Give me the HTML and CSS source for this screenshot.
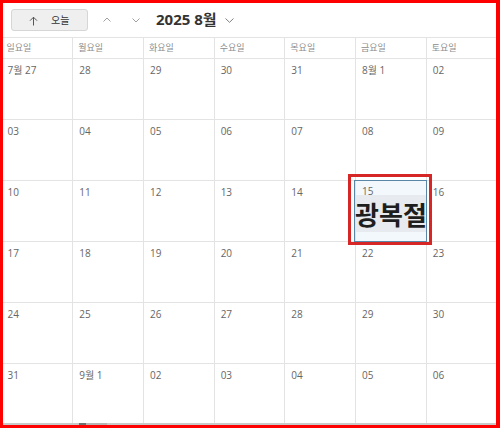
FILE: index.html
```html
<!DOCTYPE html>
<html lang="ko">
<head>
<meta charset="utf-8">
<title>Calendar</title>
<link rel="stylesheet" href="styles.css">
</head>
<body>
<div class="page">
  <div class="toolbar">
    <button class="today-btn">
      <svg class="arrow-up" width="9" height="10" viewBox="0 0 9 10"><path d="M4.5 1.2V9.5M1 4.7L4.5 1.2L8 4.7" fill="none" stroke="#555" stroke-width="1"/></svg>
      <span class="today-label">오늘</span>
    </button>
    <svg class="chev chev-up" width="8" height="5" viewBox="0 0 8 5"><path d="M0.5 4.5L4 1L7.5 4.5" fill="none" stroke="#a0a0a0" stroke-width="1"/></svg>
    <svg class="chev chev-down" width="8" height="5" viewBox="0 0 8 5"><path d="M0.5 0.5L4 4L7.5 0.5" fill="none" stroke="#a0a0a0" stroke-width="1"/></svg>
    <span class="title">2025 8월</span>
    <svg class="chev chev-drop" width="9" height="5" viewBox="0 0 9 5"><path d="M0.5 0.5L4.5 4.3L8.5 0.5" fill="none" stroke="#808080" stroke-width="1"/></svg>
  </div>

  <div class="cal">
    <div class="dow-row">
      <div class="dow">일요일</div><div class="dow">월요일</div><div class="dow">화요일</div><div class="dow">수요일</div><div class="dow">목요일</div><div class="dow">금요일</div><div class="dow">토요일</div>
    </div>
    <div class="week">
      <div class="day"><span class="num">7월 27</span></div><div class="day"><span class="num">28</span></div><div class="day"><span class="num">29</span></div><div class="day"><span class="num">30</span></div><div class="day"><span class="num">31</span></div><div class="day"><span class="num">8월 1</span></div><div class="day"><span class="num">02</span></div>
    </div>
    <div class="week">
      <div class="day"><span class="num">03</span></div><div class="day"><span class="num">04</span></div><div class="day"><span class="num">05</span></div><div class="day"><span class="num">06</span></div><div class="day"><span class="num">07</span></div><div class="day"><span class="num">08</span></div><div class="day"><span class="num">09</span></div>
    </div>
    <div class="week">
      <div class="day"><span class="num">10</span></div><div class="day"><span class="num">11</span></div><div class="day"><span class="num">12</span></div><div class="day"><span class="num">13</span></div><div class="day"><span class="num">14</span></div><div class="day sel"><span class="num">15</span><div class="event">광복절</div></div><div class="day"><span class="num">16</span></div>
    </div>
    <div class="week">
      <div class="day"><span class="num">17</span></div><div class="day"><span class="num">18</span></div><div class="day"><span class="num">19</span></div><div class="day"><span class="num">20</span></div><div class="day"><span class="num">21</span></div><div class="day"><span class="num">22</span></div><div class="day"><span class="num">23</span></div>
    </div>
    <div class="week">
      <div class="day"><span class="num">24</span></div><div class="day"><span class="num">25</span></div><div class="day"><span class="num">26</span></div><div class="day"><span class="num">27</span></div><div class="day"><span class="num">28</span></div><div class="day"><span class="num">29</span></div><div class="day"><span class="num">30</span></div>
    </div>
    <div class="week last">
      <div class="day"><span class="num">31</span></div><div class="day"><span class="num">9월 1</span></div><div class="day"><span class="num">02</span></div><div class="day"><span class="num">03</span></div><div class="day"><span class="num">04</span></div><div class="day"><span class="num">05</span></div><div class="day"><span class="num">06</span></div>
    </div>
  </div>

  <div class="scrollbar"><div class="thumb"></div></div>

  <div class="mark"></div>
  <div class="frame"></div>
</div>
</body>
</html>
```

FILE: styles.css
```css
* { box-sizing: border-box; }

html, body {
  margin: 0;
  padding: 0;
  background: #ffffff;
}

body {
  font-family: "Open Sans", "Noto Sans CJK KR", sans-serif;
  color: #333;
}

.page {
  position: relative;
  width: 500px;
  height: 428px;
  overflow: hidden;
  background: #ffffff;
}

/* toolbar */
.toolbar {
  height: 37px;
  padding: 9px 0 0 11px;
  display: flex;
  align-items: flex-start;
}

.today-btn {
  width: 77px;
  height: 22px;
  margin: 0;
  padding: 0 0 0 17px;
  border: 1px solid #d6d6d6;
  border-radius: 3px;
  background: #efefef;
  display: flex;
  align-items: center;
  font-family: "Noto Sans CJK KR", sans-serif;
  font-size: 10px;
  color: #333;
}

.arrow-up {
  display: block;
  margin-top: 1px;
}

.today-label {
  margin-left: 13px;
  line-height: 12px;
}

.chev {
  display: block;
}

.chev-up {
  margin: 8px 0 0 15px;
}

.chev-down {
  margin: 9px 0 0 21px;
}

.title {
  margin-left: 16px;
  font-family: "Open Sans", "Noto Sans CJK KR", sans-serif;
  font-weight: 700;
  font-size: 15px;
  line-height: 20px;
  color: #333;
}

.chev-drop {
  margin: 9px 0 0 8px;
}

/* calendar grid */
.cal {
  margin-left: 1.5px;
  width: 495px;
}

.dow-row,
.week {
  display: grid;
  grid-template-columns: repeat(7, 1fr);
}

.dow-row {
  height: 22px;
  border-top: 1px solid #e3e3e3;
  border-bottom: 1px solid #e3e3e3;
}

.dow {
  padding: 4px 0 0 5px;
  font-family: "Noto Sans CJK KR", sans-serif;
  font-size: 9px;
  line-height: 12px;
  color: #8c8c8c;
}

.dow + .dow,
.day + .day {
  border-left: 1px solid #e3e3e3;
}

.week {
  height: 61px;
  border-bottom: 1px solid #e3e3e3;
}

.week.last {
  height: 59px;
  border-bottom: none;
}

.day {
  padding: 5px 0 0 6px;
  min-width: 0;
}

.num {
  display: block;
  font-family: "Open Sans", "Noto Sans CJK KR", sans-serif;
  font-size: 10px;
  line-height: 13px;
  color: #666;
}

.day.sel {
  position: relative;
  z-index: 1;
  padding-left: 0;
  padding-right: 0;
  padding-top: 4px;
  background: #f3f8fc;
  outline: 1px solid #5a87a6;
}

.day.sel .num {
  padding-left: 6px;
}

.event {
  margin-top: -3px;
  height: 37px;
  background: #e7ebef;
  font-family: "Noto Sans CJK KR", sans-serif;
  font-weight: 700;
  font-size: 26px;
  line-height: 37px;
  color: #1e1e1e;
  text-align: center;
  white-space: nowrap;
  display: flex;
  justify-content: center;
  overflow: visible;
}

/* bottom scrollbar strip */
.scrollbar {
  height: 2px;
  background: #c9c9c9;
  position: relative;
}

.thumb {
  position: absolute;
  left: 79px;
  top: 0;
  width: 28px;
  height: 2px;
  background: linear-gradient(to right, #707070 0, #707070 7px, #b9b4b4 7px, #b9b4b4 100%);
}

/* annotation overlays */
.mark {
  position: absolute;
  left: 348px;
  top: 174px;
  width: 84px;
  height: 71px;
  border: 3px solid #d62626;
  z-index: 5;
  pointer-events: none;
}

.frame {
  position: absolute;
  left: 0;
  top: 0;
  width: 500px;
  height: 428px;
  border-style: solid;
  border-color: #ff0000;
  border-width: 3px 4px 3px 3px;
  z-index: 10;
  pointer-events: none;
}
```
